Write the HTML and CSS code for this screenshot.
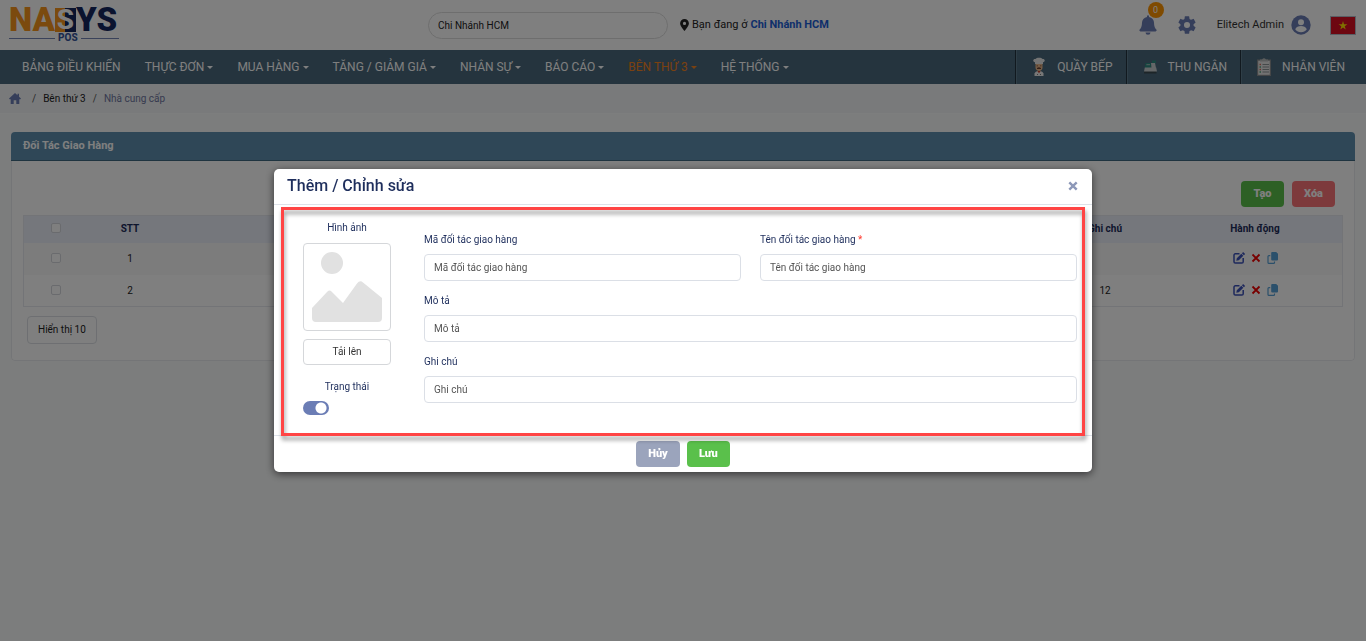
FILE: index.html
```html
<!DOCTYPE html>
<html lang="vi">
<head>
<meta charset="utf-8">
<meta name="viewport" content="width=device-width, initial-scale=1">
<title>Đối Tác Giao Hàng</title>
<link rel="stylesheet" href="styles.css">
</head>
<body>
<svg class="sprite" aria-hidden="true">
  <symbol id="i-edit" viewBox="0 0 12 12"><path d="M6.500 1.800H2.300a1.300 1.300 0 0 0-1.300 1.300v6.600A1.300 1.300 0 0 0 2.300 11h6.600a1.300 1.300 0 0 0 1.300-1.300V6" fill="none" stroke="currentColor" stroke-width="1.500"/><path d="M3.800 6.300 8.300 1.800l2 2-4.500 4.500-2.500.5zM8.900 1.200l.8-.8c.3-.3.700-.3 1 0l1 1c.3.3.3.700 0 1l-.8.8z" fill="currentColor"/></symbol>
  <symbol id="i-x" viewBox="0 0 10 10"><path d="M1.500 1.500l7 7M8.500 1.500l-7 7" stroke="currentColor" stroke-width="1.800" fill="none"/></symbol>
  <symbol id="i-close" viewBox="0 0 10 10"><path d="M1.300 1.300l7.400 7.400M8.700 1.300l-7.400 7.400" stroke="currentColor" stroke-width="2.400" fill="none"/></symbol>
  <symbol id="i-copy" viewBox="0 0 12 12"><path d="M5.200 0h4L11 1.800V7.500A1 1 0 0 1 10 8.500H5.200a1 1 0 0 1-1-1V1a1 1 0 0 1 1-1z" fill="currentColor"/><path d="M3.300 3.600H1.900a.9.900 0 0 0-.9.900V10.400a.9.900 0 0 0 .9.900H6.600a.9.900 0 0 0 .9-.9V9.400" fill="none" stroke="currentColor" stroke-width="1.200"/></symbol>
</svg>

<header class="topbar">
  <a class="logo" href="#" aria-label="NASYS POS">
    <span class="logo-word"><span class="orange">NA</span><span class="logo-tile">S</span><span class="navy">YS</span></span>
    <span class="logo-sub">POS</span>
  </a>
  <div class="branch">
    <input class="branch-select" type="text" value="Chi Nhánh HCM" aria-label="Chi nhánh">
    <p class="branch-now">
      <svg class="pin" viewBox="0 0 9 12"><path fill="currentColor" fill-rule="evenodd" d="M4.500 0a4.400 4.400 0 0 1 4.400 4.400C8.900 6.500 6.200 10 4.500 12 2.800 10 .1 6.500.1 4.400A4.400 4.400 0 0 1 4.500 0zm0 2.800a1.600 1.600 0 1 0 0 3.200 1.600 1.600 0 0 0 0-3.200z"/></svg>
      Bạn đang ở <a href="#">Chi Nhánh HCM</a>
    </p>
  </div>
  <div class="account">
    <button class="icon-btn bell" aria-label="Thông báo">
      <svg width="18" height="20" viewBox="0 0 18 20"><path fill="currentColor" d="M8 1.200a1 1 0 0 1 2 0v.7c3 .5 5 2.800 5 5.700 0 4 1 5.700 2.300 7 .7.700.2 1.800-.7 1.800H1.400c-.9 0-1.400-1.100-.7-1.800C2 13.300 3 11.600 3 7.600c0-2.900 2-5.200 5-5.700zM6.500 17.500h5a2.500 2.300 0 0 1-5 0z"/></svg>
      <span class="badge">0</span>
    </button>
    <button class="icon-btn gear" aria-label="Cài đặt">
      <svg width="22" height="22" viewBox="0 0 24 24"><path fill="currentColor" d="M19.140 12.940c.04-.3.060-.610.060-.940s-.020-.640-.070-.940l2.030-1.580a.49.490 0 0 0 .120-.610l-1.920-3.320a.488.488 0 0 0-.590-.220l-2.390.960c-.5-.380-1.030-.700-1.620-.940l-.360-2.540a.484.484 0 0 0-.480-.410h-3.840c-.240 0-.430.170-.470.410l-.360 2.540c-.590.240-1.130.570-1.620.940l-2.390-.960c-.220-.080-.470 0-.590.220L2.740 8.870c-.120.210-.080.470.120.610l2.030 1.580c-.050.300-.090.630-.090.940s.020.640.070.940l-2.030 1.580a.49.490 0 0 0-.120.610l1.920 3.320c.120.220.370.290.590.220l2.390-.960c.5.380 1.030.700 1.620.940l.360 2.540c.050.240.240.410.480.410h3.840c.240 0 .440-.170.470-.410l.360-2.540c.590-.240 1.130-.560 1.620-.940l2.390.960c.220.080.470 0 .590-.220l1.920-3.320a.49.490 0 0 0-.120-.610zM12 15.300a3.300 3.300 0 1 1 0-6.600 3.300 3.300 0 0 1 0 6.600z"/></svg>
    </button>
    <a class="user" href="#">Elitech Admin
      <svg width="20" height="20" viewBox="0 0 20 20"><circle cx="10" cy="10" r="9.700" fill="#6b7db5"/><circle cx="10" cy="7.200" r="3" fill="#fff"/><path d="M4.200 14.300c1-2.300 3.200-3.300 5.800-3.300s4.800 1 5.800 3.300a7.200 7.200 0 0 1-11.600 0z" fill="#fff"/></svg>
    </a>
    <svg class="flag" width="26" height="19" viewBox="0 0 26 19"><path fill="#b5bdc9" d="M0 0h26v19H0z"/><path fill="#da0f23" d="M1 1h24v17H1z"/><path fill="#ffe000" d="m13 5 1 3.200h3.400l-2.700 2 1 3.200-2.700-2-2.700 2 1-3.200-2.700-2H12z"/></svg>
  </div>
</header>

<nav class="mainnav">
  <ul class="menu">
    <li><a href="#">BẢNG ĐIỀU KHIỂN</a></li>
    <li><a class="drop" href="#">THỰC ĐƠN</a></li>
    <li><a class="drop" href="#">MUA HÀNG</a></li>
    <li><a class="drop" href="#">TĂNG / GIẢM GIÁ</a></li>
    <li><a class="drop" href="#">NHÂN SỰ</a></li>
    <li><a class="drop" href="#">BÁO CÁO</a></li>
    <li><a class="drop active" href="#">BÊN THỨ 3</a></li>
    <li><a class="drop" href="#">HỆ THỐNG</a></li>
  </ul>
  <ul class="stations">
    <li><a href="#">
      <svg width="20" height="20" viewBox="0 0 20 20"><path fill="#e9e9e9" d="M6 7V5.200C3.200 4.800 4 1.500 6.500 2 7.500.3 12.500.3 13.500 2c2.500-.5 3.300 2.800.5 3.200V7z"/><path fill="#e9b98c" d="M6.500 7h7v3.500c0 2-1.500 3.500-3.500 3.500s-3.500-1.500-3.500-3.500z"/><path fill="#6b4030" d="M8 11q2-1.600 4 0v1H8zM7.600 8.500h1.300v.8H7.600zm3.500 0h1.300v.8h-1.300z"/><path fill="#eee" d="M5.500 19v-2.500q.5-2 3-2.500h3q2.500.5 3 2.500V19z"/><path fill="#c8432f" d="M8.300 14h3.400L10 16.200z"/><path fill="#777" d="M8 17h1v1H8zm3 0h1v1h-1z"/></svg>
      QUẦY BẾP</a></li>
    <li><a href="#">
      <svg width="20" height="20" viewBox="0 0 20 20"><path fill="#3b4a50" d="M4 14h12.500v2.500H4z"/><path fill="#2c8b80" d="M5.500 6H11l.5 5H4.800zM12 3.500h4V6h-4z"/><path fill="#c9ced1" d="M11 6h4l1 5h-4.500zM4.800 10.500h11.400l.8 4H4z"/><path fill="#8fb5b0" d="M6.500 7h3.500v1.200H6.300z"/></svg>
      THU NGÂN</a></li>
    <li><a href="#">
      <svg width="20" height="20" viewBox="0 0 20 20"><path fill="#8a8d8f" d="M3 2.500h14V19H3z"/><path fill="#e4e4e4" d="M4.200 3.700h11.600v14.100H4.200z"/><path fill="#b7babb" d="M6 4.500V2.500h2Q10 0 12 2.500h2v2z"/><path stroke="#8b9295" stroke-width="1" d="M8.500 7.500H15M8.500 10H15M8.500 12.500H15M8.500 15H15"/><path stroke="#d46a5c" stroke-width="1.300" d="M5.500 7.500h1.500M5.500 12.500h1.500"/><path stroke="#4c9f78" stroke-width="1.300" d="M5.500 10h1.500M5.500 15h1.500"/></svg>
      NHÂN VIÊN</a></li>
  </ul>
</nav>

<ol class="crumbs">
  <li><a href="#" aria-label="Trang chủ"><svg width="12" height="11" viewBox="0 0 12 11"><path fill="#6b7db5" d="M6 0l2.500 2.300V.8H10v2.900l2 1.900-.6.700H10.300V11H7.300V7.300H4.700V11h-3V6.300H.6L0 5.600z"/></svg></a></li>
  <li><a href="#">Bên thứ 3</a></li>
  <li class="here">Nhà cung cấp</li>
</ol>

<main class="page">
  <section class="card">
    <h1 class="card-title">Đối Tác Giao Hàng</h1>
    <div class="card-body">
      <div class="toolbar">
        <button class="btn green">Tạo</button>
        <button class="btn red">Xóa</button>
      </div>
      <table class="grid">
        <colgroup><col class="c-check"><col class="c-no"><col><col class="c-note"><col class="c-act"></colgroup>
        <thead>
          <tr><th><input type="checkbox" aria-label="Chọn tất cả"></th><th>STT</th><th></th><th>Ghi chú</th><th>Hành động</th></tr>
        </thead>
        <tbody>
          <tr><td><input type="checkbox" aria-label="Chọn dòng 1"></td><td>1</td><td></td><td></td><td>
            <span class="actions"><button class="edit" aria-label="Sửa"><svg width="12" height="12"><use href="#i-edit"/></svg></button><button class="del" aria-label="Xóa"><svg width="10" height="10"><use href="#i-x"/></svg></button><button class="copy" aria-label="Sao chép"><svg width="12" height="12"><use href="#i-copy"/></svg></button></span></td></tr>
          <tr><td><input type="checkbox" aria-label="Chọn dòng 2"></td><td>2</td><td></td><td>12</td><td>
            <span class="actions"><button class="edit" aria-label="Sửa"><svg width="12" height="12"><use href="#i-edit"/></svg></button><button class="del" aria-label="Xóa"><svg width="10" height="10"><use href="#i-x"/></svg></button><button class="copy" aria-label="Sao chép"><svg width="12" height="12"><use href="#i-copy"/></svg></button></span></td></tr>
        </tbody>
      </table>
      <button class="page-size">Hiển thị 10</button>
    </div>
  </section>
</main>

<div class="backdrop">
  <form class="modal" role="dialog" aria-labelledby="modal-title">
    <div class="modal-head">
      <h2 id="modal-title">Thêm / Chỉnh sửa</h2>
      <button class="close" type="button" aria-label="Đóng"><svg width="10" height="10"><use href="#i-close"/></svg></button>
    </div>
    <div class="modal-body">
      <div class="side">
        <span class="label">Hình ảnh</span>
        <div class="thumb">
          <svg viewBox="0 0 70 70"><g fill="#e1e1e1"><circle cx="20" cy="11" r="11"/><path d="M0 56 15.500 39.500q2-2 4 0L31 51 45 31.500q3-4 6-1L70 46V66q0 4-4 4H4q-4 0-4-4z"/></g></svg>
        </div>
        <button class="upload" type="button">Tải lên</button>
        <label class="label status" for="status">Trạng thái</label>
        <input class="switch" id="status" type="checkbox" role="switch" checked>
      </div>
      <div class="fields">
        <div class="field">
          <label class="label" for="code">Mã đối tác giao hàng</label>
          <input id="code" type="text" placeholder="Mã đối tác giao hàng">
        </div>
        <div class="field">
          <label class="label" for="name">Tên đối tác giao hàng <span class="req">*</span></label>
          <input id="name" type="text" placeholder="Tên đối tác giao hàng">
        </div>
        <div class="field wide">
          <label class="label" for="desc">Mô tả</label>
          <input id="desc" type="text" placeholder="Mô tả">
        </div>
        <div class="field wide">
          <label class="label" for="note">Ghi chú</label>
          <input id="note" type="text" placeholder="Ghi chú">
        </div>
      </div>
      <div class="highlight" aria-hidden="true"></div>
    </div>
    <div class="modal-foot">
      <button class="btn grey" type="button">Hủy</button>
      <button class="btn green" type="submit">Lưu</button>
    </div>
  </form>
</div>
</body>
</html>
```

FILE: styles.css
```css
* { box-sizing: border-box; }

body {
  margin: 0;
  min-height: 100vh;
  background: #f9fafb;
  color: #222;
  font: 400 10px/16px Roboto, "Noto Sans", sans-serif;
}

button, input { font: inherit; color: inherit; }
button { cursor: pointer; padding: 0; border: 0; background: none; }
a { color: inherit; text-decoration: none; }
ul, ol { list-style: none; margin: 0; padding: 0; }
h1, h2, p { margin: 0; }
svg { display: block; flex: none; }
.sprite { position: absolute; width: 0; height: 0; }

/* Top bar */
.topbar {
  display: flex;
  align-items: center;
  height: 50px;
  padding: 0 10px 0 9px;
  background: #fff;
}
.logo { display: flex; flex-direction: column; align-self: flex-start; width: 110px; padding-top: 8px; }
.logo-word { display: flex; align-items: center; height: 24px; font-size: 33px; font-weight: 900; line-height: 24px; }
.orange { color: #f7941d; }
.navy { color: #14275f; }
.logo-tile {
  width: 21px;
  text-align: center;
  background: linear-gradient(90deg, #f7941d 50%, #14275f 50%);
  color: #fff;
  font-size: 28px;
  font-weight: 700;
}
.logo-sub { display: flex; align-items: center; gap: 3px; margin-top: 1px; color: #34549b; font-size: 10px; font-weight: 800; line-height: 10px; }
.logo-sub::before, .logo-sub::after { content: ""; flex: 1; height: 1px; background: #7585b4; }
.logo-sub::before { flex-grow: 1.2; }
.branch { display: flex; align-items: center; gap: 12px; margin-left: 309px; }
.branch-select {
  width: 240px;
  height: 27px;
  padding: 0 9px;
  border: 1px solid #ddd;
  border-radius: 14px;
  background: #fff;
}
.branch-now { display: flex; align-items: center; gap: 3px; font-size: 11px; }
.branch-now a { color: #1d5fd6; font-weight: 700; }
.pin { width: 9px; height: 12px; }
.account { display: flex; align-items: center; gap: 19px; margin-left: auto; color: #333; }
.icon-btn { position: relative; color: #6b7db5; }
.badge {
  position: absolute;
  top: -13px;
  left: 9px;
  width: 16px;
  height: 16px;
  border-radius: 50%;
  background: #ff9500;
  color: #fff;
  font-size: 9px;
}
.user { display: flex; align-items: center; gap: 7px; font-size: 11px; }

/* Navigation */
.mainnav {
  display: flex;
  justify-content: space-between;
  height: 34px;
  padding-left: 22px;
  background: #4a697c;
  color: #fff;
  font-size: 12px;
  white-space: nowrap;
}
.menu, .stations { display: flex; align-items: center; }
.menu { gap: 24px; }
.drop { display: flex; align-items: center; gap: 3px; }
.drop::after { content: ""; border: 3px solid transparent; border-top-color: currentColor; border-bottom: 0; }
.active { color: #f58220; }
.stations li { border-left: 1px solid #22333f; }
.stations a {
  display: flex;
  align-items: center;
  gap: 8px;
  height: 34px;
  padding: 0 13px 0 12px;
  border-left: 1px solid #5f7c8e;
}
.stations li:last-child a { padding-right: 21px; }

/* Breadcrumb */
.crumbs {
  display: flex;
  align-items: center;
  height: 30px;
  padding: 0 9px;
  border-bottom: 1px solid #fbfcfd;
  background: #f2f4f6;
}
.crumbs li + li::before { content: "/"; margin: 0 7px; color: #555; }
.crumbs li:first-child { margin-right: 4px; }
.here { color: #6f74a0; }

/* Card */
.page { padding: 18px 11px; }
.card { border-radius: 4px; background: #fff; overflow: hidden; }
.card-title {
  padding: 0 12px;
  border-bottom: 1px solid #3f6881;
  background: #5f8fae;
  color: #fff;
  font-size: 11px;
  font-weight: 700;
  line-height: 28px;
}
.card-body {
  padding: 20px 11px 16px;
  border: 1px solid #e9ebee;
  border-top: 0;
  border-radius: 0 0 4px 4px;
}
.toolbar { display: flex; justify-content: flex-end; gap: 8px; padding: 0 8px 8px 0; }
.btn {
  min-width: 43px;
  height: 26px;
  padding: 0 12px;
  border-radius: 4px;
  color: #fff;
  font-size: 11px;
  font-weight: 900;
}
.green { background: #5ac04b; }
.red { background: #fb7478; }
.grey { background: #9ba4bc; }

.grid { width: 100%; border-collapse: collapse; table-layout: fixed; text-align: center; outline: 1px solid #e6e8ee; outline-offset: -1px; }
.c-check { width: 66px; }
.c-no { width: 82px; }
.c-note { width: 124px; }
.c-act { width: 176px; }
.grid th { height: 28px; padding: 0; background: #eaeef8; color: #1d2c5a; font-weight: 700; }
.grid td { height: 32px; padding: 0; }
.grid tbody tr:first-child { background: #f9f9f9; }
.grid input {
  appearance: none;
  display: block;
  width: 10px;
  height: 10px;
  margin: 0 auto 3px;
  border: 1px solid #d4d7dc;
  border-radius: 2px;
  background: #fff;
}
.actions { display: flex; justify-content: center; align-items: center; gap: 6px; padding: 0 0 2px 2px; }
.edit { color: #3a50b8; }
.del { color: #f00000; }
.copy { color: #56a0d6; }
.page-size {
  height: 28px;
  margin: 9px 0 0 4px;
  padding: 0 10px;
  border: 1px solid #dcdfe4;
  border-radius: 4px;
}

/* Modal */
.backdrop {
  position: fixed;
  inset: 0;
  display: flex;
  align-items: center;
  justify-content: center;
  background: rgba(0, 0, 0, .5);
}
.modal {
  width: 60%;
  max-width: 818px;
  border-radius: 5px;
  background: #fff;
  box-shadow: 0 2px 8px rgba(0, 0, 0, .6);
}
.modal-head {
  display: flex;
  align-items: center;
  justify-content: space-between;
  height: 36px;
  padding: 0 14px 2px 13px;
  border-bottom: 1px solid #dee2e9;
}
.modal-head h2 { color: #1e2e5c; font-size: 16px; font-weight: 500; line-height: 20px; }
.close { color: #8d98b8; }
.modal-body {
  position: relative;
  display: flex;
  gap: 33px;
  padding: 15px 15px 20px 29px;
}
.label { color: #1e2e5c; }
.side { display: flex; flex-direction: column; width: 88px; }
.side .label { text-align: center; }
.thumb { height: 88px; margin-top: 7px; padding: 8px; border: 1px solid #d5d7da; border-radius: 4px; }
.upload { height: 26px; margin-top: 8px; border: 1px solid #d5d7da; border-radius: 4px; color: #333; }
.status { margin-top: 14px; }
.switch {
  appearance: none;
  width: 26px;
  height: 14px;
  margin: 6px 0 0;
  border-radius: 7px;
  background: radial-gradient(circle at 18px 7px, #fff 5px, #6b7db5 6px);
}
.fields {
  flex: 1;
  display: grid;
  grid-template-columns: 1fr 1fr;
  gap: 12px 19px;
  align-content: start;
  padding-top: 12px;
}
.field { display: flex; flex-direction: column; gap: 6px; }
.wide { grid-column: 1 / -1; }
.field input {
  width: 100%;
  height: 27px;
  padding: 0 9px;
  border: 1px solid #dbdfe6;
  border-radius: 4px;
  background: #fff;
}
.field input::placeholder { color: #555; opacity: 1; }
.req { color: #ff3b30; }
.highlight {
  position: absolute;
  inset: 2px 7px -1px;
  border: 3px solid #ff4444;
  filter: drop-shadow(1px 4px 2px rgba(0, 0, 0, .4));
  pointer-events: none;
}
.modal-foot {
  display: flex;
  justify-content: center;
  gap: 7px;
  padding: 5px;
  border-top: 1px solid #dee2e9;
}
```
